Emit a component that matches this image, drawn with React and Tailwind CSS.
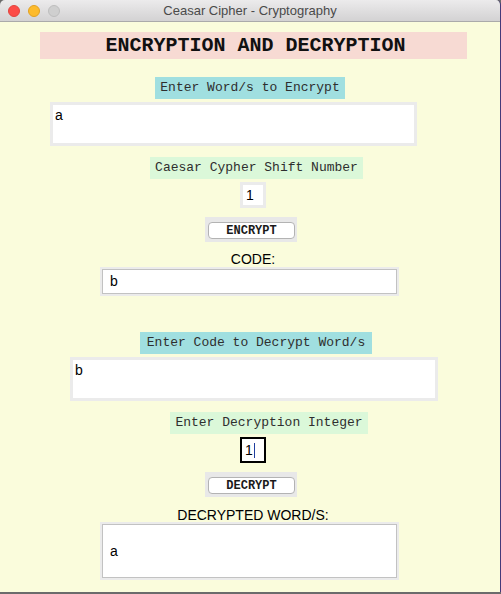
import { useState } from "react";

const mono = { fontFamily: '"Liberation Mono", "Courier New", monospace' };
const sans = { fontFamily: '"Liberation Sans", Arial, Helvetica, sans-serif' };

const Label = ({ children, color, className }) => (
  <div
    className={`h-[22px] flex items-center justify-center text-[13px] text-[#2e2e2e] ${color} ${className}`}
    style={mono}
  >
    {children}
  </div>
);

const ActionButton = ({ children, className }) => (
  <div className={`w-[92px] h-[25px] bg-[#e8e8e8] pt-[5px] px-[3px] ${className}`}>
    <button
      type="button"
      className="w-[87px] h-[17px] bg-white border border-[#b3b3b3] rounded-[4px] flex items-center justify-center text-[12px] font-bold text-[#1a1a1a] leading-none"
      style={mono}
    >
      {children}
    </button>
  </div>
);

const App = () => {
  const [plain] = useState("a");
  const [shift] = useState("1");
  const [code] = useState("b");

  return (
    <div className="w-[501px] h-[594px] flex flex-col bg-[#6b6b6b] overflow-hidden" style={sans}>
      <div className="h-[592px] flex flex-col border-r border-[#44397a] rounded-t-[5px] overflow-hidden">
        {/* title bar */}
        <div className="h-[22px] shrink-0 flex items-center relative bg-gradient-to-b from-[#ecebec] to-[#d3d2d3] border-b border-[#aaaaaa]">
          <div className="flex items-center gap-[8px] pl-[8px]">
            <span className="w-[12px] h-[12px] rounded-full bg-[#fc4b47] border border-[#e0443e]" />
            <span className="w-[12px] h-[12px] rounded-full bg-[#fdbb2c] border border-[#e1a123]" />
            <span className="w-[12px] h-[12px] rounded-full bg-[#cfcfcf] border border-[#bdbdbd]" />
          </div>
          <div className="absolute inset-0 flex items-center justify-center text-[13px] text-[#4a4a4a]">
            Ceasar Cipher - Cryptography
          </div>
        </div>

        {/* content */}
        <div className="flex-1 flex flex-col items-start bg-[#fafcdc]">
          <div
            className="mt-[10px] ml-[40px] w-[427px] h-[27px] bg-[#f7dad3] flex items-center justify-center text-[20px] font-bold text-[#111] pl-[4px]"
            style={mono}
          >
            ENCRYPTION AND DECRYPTION
          </div>

          <Label color="bg-[#a0dfe0]" className="mt-[18px] ml-[155px] w-[190px]">
            Enter Word/s to Encrypt
          </Label>
          <div className="mt-[3px] ml-[50px] w-[367px] h-[44px] bg-white border-[3px] border-[#ebebeb] px-[2px] pt-[2px] text-[14px] leading-[16px] text-black">
            {plain}
          </div>

          <Label color="bg-[#dbf8d9]" className="mt-[11px] ml-[150px] w-[213px]">
            Caesar Cypher Shift Number
          </Label>
          <div className="mt-[3px] ml-[240px] w-[26px] h-[26px] bg-white border-[3px] border-[#ebebeb] pl-[3px] flex items-center text-[14px] text-black">
            {shift}
          </div>

          <ActionButton className="mt-[9px] ml-[205px]">ENCRYPT</ActionButton>

          <div className="mt-[9px] w-full h-[15px] flex items-center justify-center pl-[6px] text-[14px] text-black leading-none">
            CODE:
          </div>
          <div className="mt-[1px] ml-[100px] w-[299px] h-[29px] border-2 border-[#ebebeb]">
            <div className="w-full h-full bg-white border border-[#c2c2c2] pl-[7px] flex items-center text-[14px] text-black">
              {code}
            </div>
          </div>

          <Label color="bg-[#a0dfe0]" className="mt-[36px] ml-[140px] w-[232px]">
            Enter Code to Decrypt Word/s
          </Label>
          <div className="mt-[3px] ml-[70px] w-[368px] h-[44px] bg-white border-[3px] border-[#ebebeb] px-[2px] pt-[2px] text-[14px] leading-[16px] text-black">
            {code}
          </div>

          <Label color="bg-[#dbf8d9]" className="mt-[11px] ml-[170px] w-[198px]">
            Enter Decryption Integer
          </Label>
          <div className="mt-[3px] ml-[240px] w-[26px] h-[26px] bg-white border-2 border-black pl-[3px] flex items-center text-[14px] text-black">
            {shift}
            <span className="ml-[1px] w-px h-[15px] bg-[#1f3fa0]" />
          </div>

          <ActionButton className="mt-[9px] ml-[205px]">DECRYPT</ActionButton>

          <div className="mt-[10px] w-full h-[15px] flex items-center justify-center pl-[6px] text-[14px] text-black leading-none">
            DECRYPTED WORD/S:
          </div>
          <div className="ml-[100px] w-[299px] h-[58px] border-2 border-[#ebebeb]">
            <div className="w-full h-full bg-white border border-[#c2c2c2] pl-[7px] flex items-center text-[14px] text-black">
              {plain}
            </div>
          </div>
        </div>
      </div>
    </div>
  );
};

export default App;
